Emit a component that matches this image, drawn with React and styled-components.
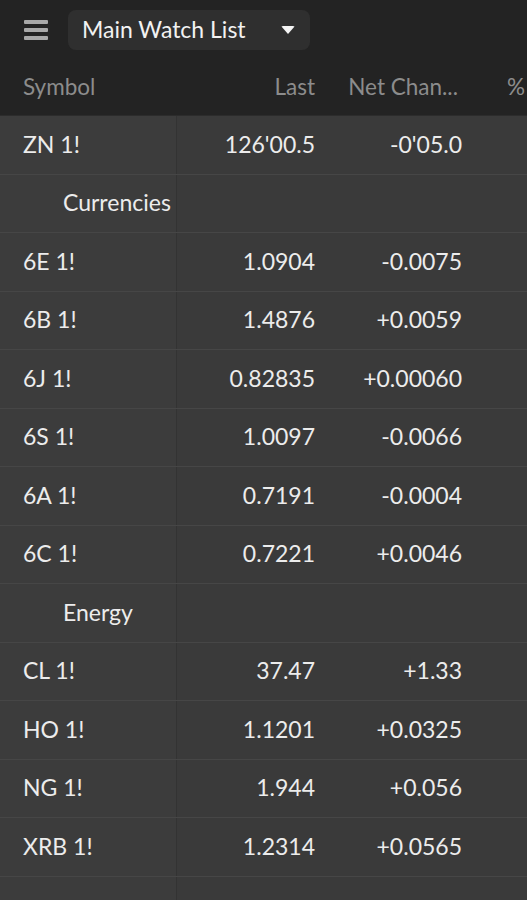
import React from 'react';
import styled, { createGlobalStyle } from 'styled-components';

const GlobalStyle = createGlobalStyle`
  html, body {
    margin: 0;
    padding: 0;
    background: #3a3a3a;
    font-family: Lato, "Open Sans", sans-serif;
  }
  * { box-sizing: border-box; }
`;

const Page = styled.div`
  width: 527px;
  height: 900px;
  overflow: hidden;
  background: #3a3a3a;
  color: #ececec;
`;

const TopBar = styled.div`
  background: #232323;
  height: 60px;
  display: flex;
  align-items: center;
  padding-left: 24px;
  gap: 20px;
`;

const Burger = styled.button`
  width: 24px;
  height: 20px;
  padding: 0;
  border: none;
  background: transparent;
  display: flex;
  flex-direction: column;
  justify-content: space-between;
  cursor: pointer;
  span {
    display: block;
    height: 4px;
    border-radius: 1px;
    background: #a8a8a8;
  }
`;

const ListSelect = styled.button`
  width: 242px;
  height: 40px;
  border: none;
  border-radius: 8px;
  background: #2f2f2f;
  color: #f2f2f2;
  font-family: inherit;
  font-size: 23px;
  display: flex;
  align-items: center;
  justify-content: space-between;
  padding: 0 15px 2px 14px;
  cursor: pointer;
`;

const Caret = styled.span`
  width: 0;
  height: 0;
  margin-top: 2px;
  border-left: 7px solid transparent;
  border-right: 7px solid transparent;
  border-top: 8px solid #f4f4f4;
  border-radius: 2px;
`;

const Cols = `177px 153px 147px 50px`;

const HeaderRow = styled.div`
  display: grid;
  grid-template-columns: ${Cols};
  height: 56px;
  background: #232323;
  color: #8c8c8c;
  font-size: 22.5px;
  align-items: center;
  border-bottom: 1px solid #2c2c2c;
  padding-bottom: 2px;
`;

const Cell = styled.div`
  padding: ${p => (p.$align === 'right' ? `0 ${p.$right || 15}px 0 0` : `0 0 0 ${p.$pad || 23}px`)};
  text-align: ${p => p.$align || 'left'};
  white-space: nowrap;
  overflow: hidden;
`;

const Row = styled.div`
  display: grid;
  grid-template-columns: ${Cols};
  height: 58.5px;
  align-items: stretch;
  font-size: 23px;
  border-bottom: 1px solid #464646;
  background: #3a3a3a;
`;

const BodyCell = styled.div`
  display: flex;
  align-items: center;
  justify-content: ${p => (p.$align === 'right' ? 'flex-end' : 'flex-start')};
  padding: ${p => (p.$align === 'right' ? '0 15px 2px 0' : `0 0 2px ${p.$indent || 23}px`)};
  white-space: nowrap;
  background: ${p => (p.$sticky ? '#3c3c3c' : 'transparent')};
  border-right: ${p => (p.$sticky ? '1px solid #333' : 'none')};
`;

const rows = [
  { sym: 'ZN 1!', last: "126'00.5", chg: "-0'05.0" },
  { group: 'Currencies' },
  { sym: '6E 1!', last: '1.0904', chg: '-0.0075' },
  { sym: '6B 1!', last: '1.4876', chg: '+0.0059' },
  { sym: '6J 1!', last: '0.82835', chg: '+0.00060' },
  { sym: '6S 1!', last: '1.0097', chg: '-0.0066' },
  { sym: '6A 1!', last: '0.7191', chg: '-0.0004' },
  { sym: '6C 1!', last: '0.7221', chg: '+0.0046' },
  { group: 'Energy' },
  { sym: 'CL 1!', last: '37.47', chg: '+1.33' },
  { sym: 'HO 1!', last: '1.1201', chg: '+0.0325' },
  { sym: 'NG 1!', last: '1.944', chg: '+0.056' },
  { sym: 'XRB 1!', last: '1.2314', chg: '+0.0565' },
  { sym: '', last: '', chg: '' },
];

export default function App() {
  return (
    <Page>
      <GlobalStyle />
      <TopBar>
        <Burger aria-label="menu">
          <span />
          <span />
          <span />
        </Burger>
        <ListSelect>
          Main Watch List
          <Caret />
        </ListSelect>
      </TopBar>
      <HeaderRow>
        <Cell>Symbol</Cell>
        <Cell $align="right">Last</Cell>
        <Cell $align="right" $right={19}>Net Chan...</Cell>
        <Cell $pad={30}>%</Cell>
      </HeaderRow>
      {rows.map((r, i) =>
        r.group ? (
          <Row key={i}>
            <BodyCell $sticky $indent={63}>{r.group}</BodyCell>
            <BodyCell />
            <BodyCell />
            <BodyCell />
          </Row>
        ) : (
          <Row key={i}>
            <BodyCell $sticky>{r.sym}</BodyCell>
            <BodyCell $align="right">{r.last}</BodyCell>
            <BodyCell $align="right">{r.chg}</BodyCell>
            <BodyCell />
          </Row>
        )
      )}
    </Page>
  );
}
